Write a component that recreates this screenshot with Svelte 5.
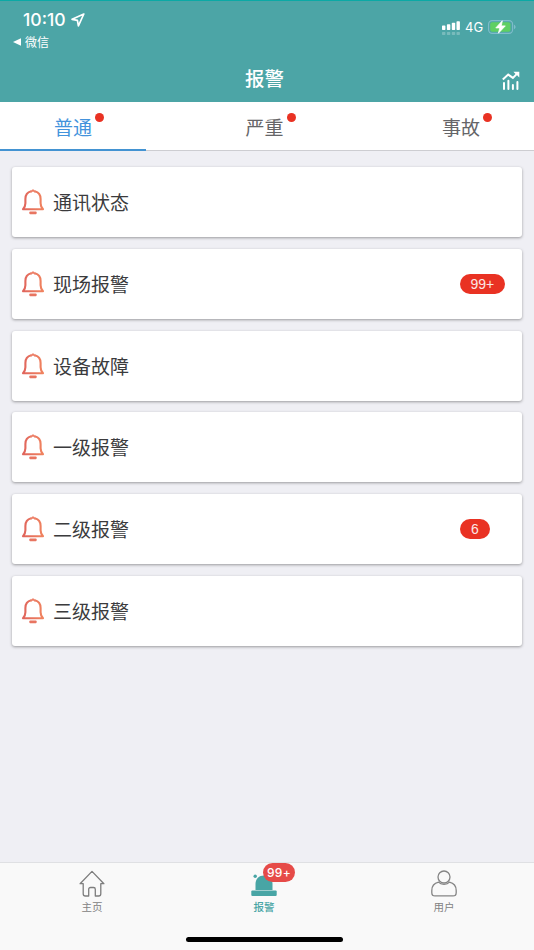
<script lang="ts">
  type Alarm = { name: string; count?: string };

  const tabs = ["普通", "严重", "事故"];
  const alarms: Alarm[] = [
    { name: "通讯状态" },
    { name: "现场报警", count: "99+" },
    { name: "设备故障" },
    { name: "一级报警" },
    { name: "二级报警", count: "6" },
    { name: "三级报警" },
  ];

  let activeTab = $state(0);
</script>

<div class="app">
  <header>
    <div class="status">
      <div class="status-left">
        <div class="time">
          <span>10:10</span>
          <svg width="14" height="14" viewBox="0 0 14 14">
            <path d="M12.8 1 1.1 6.3l5.3 1.1 1 5.4z" fill="none" stroke="#fff" stroke-width="1.7" stroke-linejoin="round" />
          </svg>
        </div>
        <div class="back">
          <svg width="8" height="8" viewBox="0 0 8 8"><path d="M0 4 8 .2v7.6z" fill="#fff" /></svg>
          <span>微信</span>
        </div>
      </div>
      <div class="status-right">
        <svg class="signal" width="19" height="15" viewBox="0 0 19 15" fill="#fff">
          <rect x="0" y="4.4" width="3.4" height="4.6" rx=".7" />
          <rect x="4.9" y="3.2" width="3.4" height="5.8" rx=".7" />
          <rect x="9.8" y="1.8" width="3.4" height="7.2" rx=".7" />
          <rect x="14.5" y=".3" width="3.4" height="8.7" rx=".7" />
          <g opacity=".25">
            <rect x="0" y="11" width="3.4" height="3" rx=".7" />
            <rect x="4.9" y="11" width="3.4" height="3" rx=".7" />
            <rect x="9.8" y="11" width="3.4" height="3" rx=".7" />
            <rect x="14.5" y="11" width="3.4" height="3" rx=".7" />
          </g>
        </svg>
        <span class="network">4G</span>
        <svg width="28" height="14" viewBox="0 0 28 14">
          <rect x=".6" y=".6" width="24" height="12.8" rx="3.6" fill="none" stroke="#80bccb" stroke-width="1.1" />
          <rect x="2.2" y="2.2" width="20.2" height="9.6" rx="2" fill="#5fcf63" />
          <path d="M26 4.8c2 .7 2 3.7 0 4.4z" fill="#80bccb" />
          <path d="M14.3.8 7.8 7.9h4L10.4 13.2l6.9-7.3h-4z" fill="#fff" stroke="#fff" stroke-width=".8" stroke-linejoin="round" />
        </svg>
      </div>
    </div>
    <div class="navbar">
      <h1>报警</h1>
      <svg class="chart" width="18" height="19" viewBox="0 0 18 19" fill="none" stroke="#fff">
        <path d="M.8 8.4 6.2 3.6l4.7 3.3 5-5" stroke-width="2" />
        <path d="M11.4.7h5.9v5.8l-2.2-2.2-1.8-1.6z" fill="#fff" stroke="none" />
        <path d="M2 12v6M6.4 9.8V18M10.9 14V18M15.4 11V18" stroke-width="2" stroke-linecap="round" />
      </svg>
    </div>
  </header>

  <nav class="tabs">
    {#each tabs as tab, i}
      <button class="tab" class:active={activeTab === i} onclick={() => (activeTab = i)}>
        <span class="tab-label">{tab}<i class="dot"></i></span>
      </button>
    {/each}
  </nav>

  <main>
    {#each alarms as alarm}
      <div class="card">
        <svg class="bell" width="24" height="26" viewBox="0 0 24 26" fill="none">
          <defs>
            <linearGradient id="bell" x1="0" y1="0" x2="1" y2="0">
              <stop offset="0" stop-color="#e0655c" />
              <stop offset="1" stop-color="#f0835f" />
            </linearGradient>
          </defs>
          <path d="M10.2 2.3C6.4 3.2 4.4 6 4.4 10v4.2c0 2.5-.6 4-2.4 6h20c-1.8-2-2.4-3.5-2.4-6V10c0-4-2-6.8-5.8-7.7" stroke="url(#bell)" stroke-width="2.1" stroke-linejoin="round" />
          <path d="M9 2.5 11.3.5h1.4L15 2.5l-1 1.3-2-1.2-2 1.2z" fill="#ed8068" />
          <rect x="8.4" y="22.5" width="7.2" height="2.7" rx=".8" fill="#e87561" />
        </svg>
        <span class="name">{alarm.name}</span>
        {#if alarm.count}
          <span class="slot"><span class="count">{alarm.count}</span></span>
        {/if}
      </div>
    {/each}
  </main>

  <footer>
    <div class="item">
      <svg width="26" height="28" viewBox="0 0 26 28" fill="none" stroke="#7d7d7d" stroke-width="1.3" stroke-linejoin="round">
        <path d="M4.2 13.7H1.1L13 1.4l11.9 12.3h-3.1v10.1a2.2 2.2 0 0 1-2.2 2.2h-3.3v-6.7a1.8 1.8 0 0 0-1.8-1.8h-3a1.8 1.8 0 0 0-1.8 1.8V26H6.4a2.2 2.2 0 0 1-2.2-2.2z" />
      </svg>
      <span>主页</span>
    </div>
    <div class="item current">
      <svg width="26" height="28" viewBox="0 0 26 28" fill="#48a5a5">
        <path d="M4.5 20V14C4.5 9 8 5.6 13 5.6s8.5 3.4 8.5 8.4V20z" />
        <rect x=".3" y="20.4" width="25.4" height="5.6" rx="1" />
        <circle cx="4.2" cy="6.2" r="1.7" />
      </svg>
      <span>报警</span>
      <b class="badge">99+</b>
    </div>
    <div class="item">
      <svg width="26" height="28" viewBox="0 0 26 28" fill="none" stroke="#858585" stroke-width="1.3">
        <circle cx="13" cy="7" r="6" />
        <path d="M7.6 12.2C3 13.3.8 16.3.8 20.5v2.2A3.2 3.2 0 0 0 4 25.9h18a3.2 3.2 0 0 0 3.2-3.2v-2.2c0-4.2-2.2-7.2-6.8-8.3-1 1.3-3 2.2-5.4 2.2s-4.4-.9-5.4-2.2z" />
      </svg>
      <span>用户</span>
    </div>
    <div class="home-bar"></div>
  </footer>
</div>

<style>
  :global(body) {
    margin: 0;
  }

  .app {
    width: 534px;
    height: 950px;
    display: flex;
    flex-direction: column;
    overflow: hidden;
    background: #efeff4;
    color: #3b3b3d;
    font-family: "Noto Sans CJK SC", sans-serif;
  }

  header {
    box-sizing: border-box;
    height: 102px;
    flex-shrink: 0;
    border-top: 1px solid #0ba9a5;
    background: #4ca5a6;
    color: #fff;
  }

  .status {
    height: 52px;
    display: flex;
    justify-content: space-between;
  }

  .time {
    display: flex;
    align-items: center;
    gap: 5px;
    height: 22px;
    padding: 8px 0 0 23px;
    font: 500 17.6px/22px Inter, sans-serif;
  }

  .back {
    display: flex;
    align-items: center;
    gap: 4px;
    padding: 1px 0 0 13px;
    font-size: 12px;
    line-height: 20px;
  }

  .status-right {
    display: flex;
    align-items: center;
    height: 16px;
    padding: 18px 18px 0 0;
  }

  .signal {
    margin: 2px 4px 0 0;
  }

  .network {
    width: 23px;
    font: 13px/16px Inter, sans-serif;
  }

  .navbar {
    display: flex;
    justify-content: space-between;
    align-items: center;
    height: 49px;
    padding: 0 14px 0 245px;
  }

  h1 {
    margin: 0;
    font-size: 19.5px;
    font-weight: 500;
    line-height: 49px;
  }

  .chart {
    margin: 5px 0 0;
  }

  .tabs {
    box-sizing: border-box;
    display: grid;
    grid-template-columns: 146px 1fr 146px;
    height: 49px;
    flex-shrink: 0;
    border-bottom: 1px solid #cdcdd1;
    background: #fff;
  }

  .tab {
    box-sizing: border-box;
    height: 49px;
    padding: 3px 0 0;
    border: 0;
    border-bottom: 2px solid transparent;
    background: none;
    color: #656568;
    font-family: inherit;
    font-size: 19px;
    line-height: 44px;
  }

  .tab:nth-child(2) {
    padding-right: 5px;
  }

  .tab.active {
    border-color: #4393d2;
    color: #4393dc;
  }

  .tab-label {
    position: relative;
  }

  .dot {
    position: absolute;
    top: 0;
    right: -12px;
    width: 9px;
    height: 9px;
    border-radius: 50%;
    background: #e93223;
  }

  main {
    flex: 1;
    display: flex;
    flex-direction: column;
    gap: 11.8px;
    padding: 16px 12px 0;
  }

  .card {
    display: flex;
    align-items: center;
    height: 70px;
    border-radius: 3px;
    background: #fff;
    box-shadow: 0 1px 3px rgba(0, 0, 0, 0.36);
  }

  .bell {
    margin: 0 8.5px 0 8.5px;
  }

  .name {
    flex: 1;
    font-size: 19px;
    line-height: 28px;
  }

  .slot {
    width: 62px;
    display: flex;
  }

  .count {
    min-width: 9px;
    padding: 0 10.5px;
    border-radius: 10px;
    background: #e93223;
    color: #fbe7e5;
    text-align: center;
    font: 14px/20px "Liberation Sans", sans-serif;
  }

  footer {
    position: relative;
    box-sizing: border-box;
    display: grid;
    grid-template-columns: 184px 160px 1fr;
    height: 88px;
    flex-shrink: 0;
    border-top: 1px solid #dfe0e3;
    background: #f9f9f9;
  }

  .item {
    position: relative;
    display: flex;
    flex-direction: column;
    align-items: center;
    padding-top: 7px;
    color: #828282;
    font-size: 10.5px;
    line-height: 18px;
  }

  .item:nth-child(3) {
    padding-left: 10px;
  }

  .item.current {
    color: #48a5a5;
    font-weight: 500;
  }

  .badge {
    position: absolute;
    top: 0;
    left: 79px;
    width: 32px;
    border-radius: 10px;
    background: #e64b48;
    color: #fff;
    text-align: center;
    font: 500 12px/19px Inter, sans-serif;
    letter-spacing: 0.3px;
  }

  .home-bar {
    position: absolute;
    left: 186px;
    bottom: 8px;
    width: 157px;
    height: 5px;
    border-radius: 3px;
    background: #000;
  }
</style>
